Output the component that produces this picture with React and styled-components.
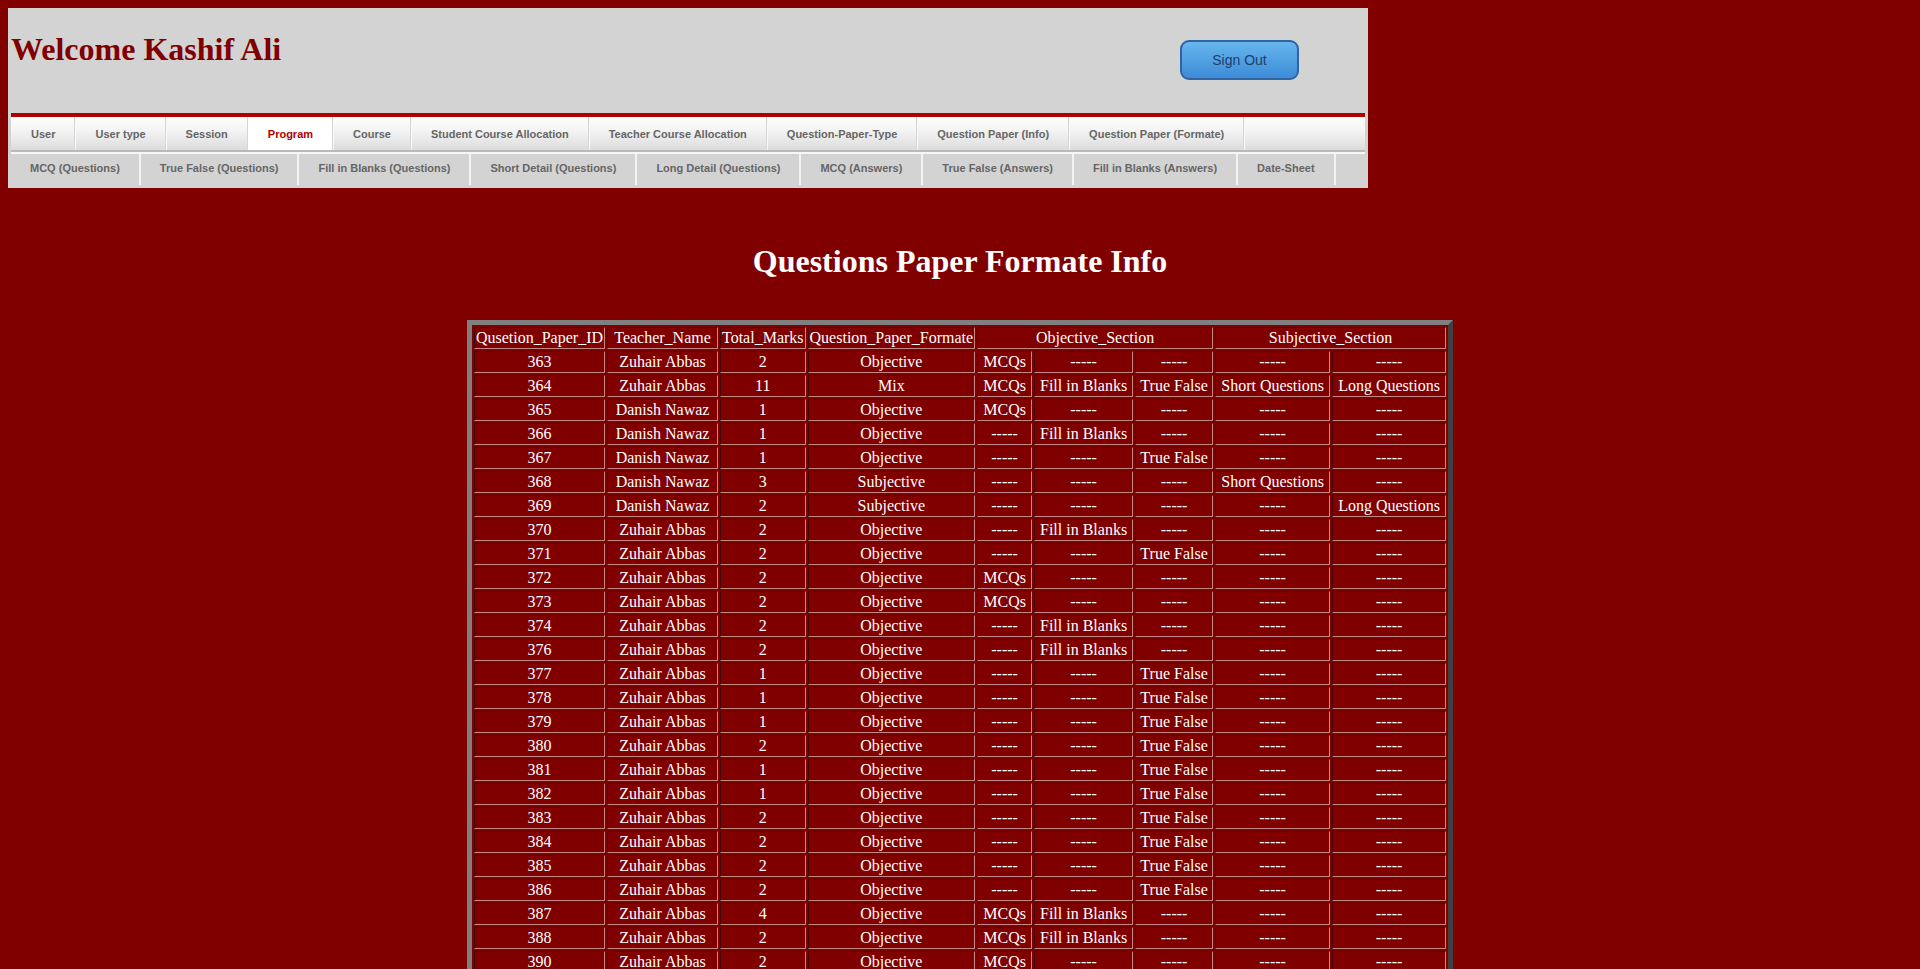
import styled, { createGlobalStyle } from 'styled-components';

// ========== GLOBAL ==========

const GlobalStyle = createGlobalStyle`
  body {
    margin: 8px;
    background-color: #800000;
    font-family: "Liberation Serif", "Times New Roman", serif;
  }
`;

// ========== HEADER ==========

const Header = styled.header`
  width: 1360px;
  background-color: #d3d3d3;
  padding-bottom: 3px;
`;

const TopBar = styled.div`
  display: flex;
  justify-content: space-between;
  align-items: flex-start;
  height: 105px;
`;

const Welcome = styled.h1`
  margin: 23px 0 0 3px;
  font-size: 32px;
  font-weight: bold;
  color: #800000;
`;

const SignOut = styled.button`
  margin: 32px 69px 0 0;
  width: 119px;
  height: 40px;
  border: 2px solid #2e64a3;
  border-radius: 9px;
  background: linear-gradient(#66b6ee, #3e8bd7);
  color: #1d3f68;
  font-family: "Liberation Sans", Arial, sans-serif;
  font-size: 14px;
  cursor: pointer;
`;

const Nav = styled.nav`
  margin: 0 3px;
  border-top: 4px solid #b00000;
`;

const MainMenu = styled.ul`
  display: flex;
  margin: 0;
  padding: 0;
  list-style: none;
  height: 33px;
  background: linear-gradient(#ffffff, #f4f4f4 40%, #dcdcdc);
  border-bottom: 2px solid #b9b9b9;
`;

const MainItem = styled.li`
  display: flex;
  align-items: center;
  padding: 0 19px 0 20px;
  border-right: 1px solid #d6d6d6;
  box-shadow: 1px 0 0 #f8f8f8;
  font-family: "Liberation Sans", Arial, sans-serif;
  font-size: 11px;
  font-weight: bold;
  color: ${p => (p.$active ? '#b00000' : '#666')};
  background: ${p => (p.$active ? '#fff' : 'transparent')};
  white-space: nowrap;
`;

const SubMenu = styled.ul`
  display: flex;
  margin: 0;
  padding: 0;
  list-style: none;
  height: 31px;
  background: #d3d3d3;
  border-top: 2px solid #f6f6f6;
`;

const SubItem = styled.li`
  display: flex;
  align-items: center;
  padding: 0 19px 4px;
  border-right: 2px solid #f3f3f3;
  font-family: "Liberation Sans", Arial, sans-serif;
  font-size: 11px;
  font-weight: bold;
  color: #666;
  white-space: nowrap;
`;

// ========== CONTENT ==========

const PageTitle = styled.h1`
  margin: 55px 0 40px;
  text-align: center;
  font-size: 32px;
  font-weight: bold;
  color: #fff;
`;

const Table = styled.table`
  margin: 0 auto;
  border-style: solid;
  border-width: 5px;
  border-color: #808080 #404040 #404040 #808080;
  border-spacing: 2px;
  color: #fff;
  font-size: 16px;
  line-height: 18px;
`;

const Col = styled.col`
  width: ${p => p.$w}px;
`;

const Cell = styled.td`
  padding: 1px;
  border: 1px solid;
  border-color: #3e0606 #c48a8a #c48a8a #3e0606;
  text-align: center;
  white-space: nowrap;
`;

const mainMenu = [
  'User', 'User type', 'Session', 'Program', 'Course', 'Student Course Allocation',
  'Teacher Course Allocation', 'Question-Paper-Type', 'Question Paper (Info)', 'Question Paper (Formate)',
];

const subMenu = [
  'MCQ (Questions)', 'True False (Questions)', 'Fill in Blanks (Questions)', 'Short Detail (Questions)',
  'Long Detail (Questions)', 'MCQ (Answers)', 'True False (Answers)', 'Fill in Blanks (Answers)', 'Date-Sheet',
];

// column widths (border-box), as in the original
const colWidths = [131, 111, 85, 167, 55, 99, 78, 115, 114];

const D = '-----';
const M = 'MCQs', F = 'Fill in Blanks', T = 'True False', S = 'Short Questions', L = 'Long Questions';
const ZA = 'Zuhair Abbas', DN = 'Danish Nawaz';

const rows = [
  [363, ZA, 2, 'Objective', M, D, D, D, D],
  [364, ZA, 11, 'Mix', M, F, T, S, L],
  [365, DN, 1, 'Objective', M, D, D, D, D],
  [366, DN, 1, 'Objective', D, F, D, D, D],
  [367, DN, 1, 'Objective', D, D, T, D, D],
  [368, DN, 3, 'Subjective', D, D, D, S, D],
  [369, DN, 2, 'Subjective', D, D, D, D, L],
  [370, ZA, 2, 'Objective', D, F, D, D, D],
  [371, ZA, 2, 'Objective', D, D, T, D, D],
  [372, ZA, 2, 'Objective', M, D, D, D, D],
  [373, ZA, 2, 'Objective', M, D, D, D, D],
  [374, ZA, 2, 'Objective', D, F, D, D, D],
  [376, ZA, 2, 'Objective', D, F, D, D, D],
  [377, ZA, 1, 'Objective', D, D, T, D, D],
  [378, ZA, 1, 'Objective', D, D, T, D, D],
  [379, ZA, 1, 'Objective', D, D, T, D, D],
  [380, ZA, 2, 'Objective', D, D, T, D, D],
  [381, ZA, 1, 'Objective', D, D, T, D, D],
  [382, ZA, 1, 'Objective', D, D, T, D, D],
  [383, ZA, 2, 'Objective', D, D, T, D, D],
  [384, ZA, 2, 'Objective', D, D, T, D, D],
  [385, ZA, 2, 'Objective', D, D, T, D, D],
  [386, ZA, 2, 'Objective', D, D, T, D, D],
  [387, ZA, 4, 'Objective', M, F, D, D, D],
  [388, ZA, 2, 'Objective', M, F, D, D, D],
  [390, ZA, 2, 'Objective', M, D, D, D, D],
];

export default function App() {
  return (
    <>
      <GlobalStyle />
      <Header>
        <TopBar>
          <Welcome>Welcome Kashif Ali</Welcome>
          <SignOut>Sign Out</SignOut>
        </TopBar>
        <Nav>
          <MainMenu>
            {mainMenu.map(item => (
              <MainItem key={item} $active={item === 'Program'}>{item}</MainItem>
            ))}
          </MainMenu>
          <SubMenu>
            {subMenu.map(item => (
              <SubItem key={item}>{item}</SubItem>
            ))}
          </SubMenu>
        </Nav>
      </Header>

      <PageTitle>Questions Paper Formate Info</PageTitle>

      <Table>
        <colgroup>
          {colWidths.map((w, i) => <Col key={i} $w={w} />)}
        </colgroup>
        <tbody>
          <tr>
            <Cell>Qusetion_Paper_ID</Cell>
            <Cell>Teacher_Name</Cell>
            <Cell>Total_Marks</Cell>
            <Cell>Question_Paper_Formate</Cell>
            <Cell colSpan={3}>Objective_Section</Cell>
            <Cell colSpan={2}>Subjective_Section</Cell>
          </tr>
          {rows.map(row => (
            <tr key={row[0]}>
              {row.map((v, i) => <Cell key={i}>{v}</Cell>)}
            </tr>
          ))}
        </tbody>
      </Table>
    </>
  );
}
